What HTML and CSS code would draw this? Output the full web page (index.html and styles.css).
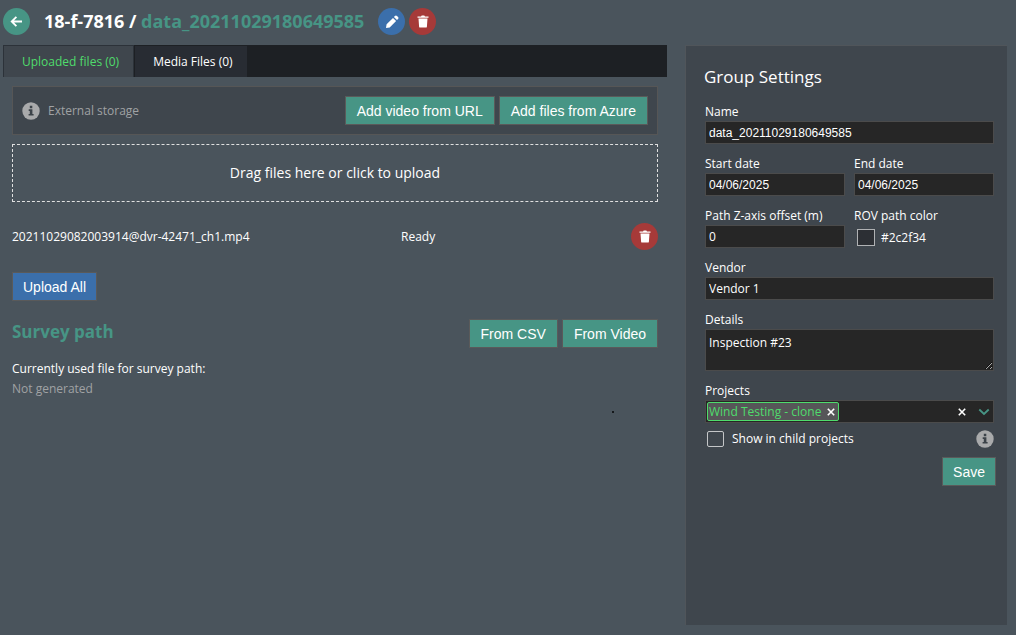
FILE: index.html
```
<!DOCTYPE html>
<html lang="en">
<head>
<meta charset="utf-8">
<title>Group upload</title>
<link rel="stylesheet" href="styles.css">
</head>
<body>
<svg class="sprite" aria-hidden="true">
  <symbol id="trash" viewBox="0 0 12 14"><path d="M.5 1.500h3.500l.7-1h2.600l.7 1h3.500v1.300H.5zM1.500 3.500h9l-.6 8.200a1 1 0 0 1-1 .9H3.100a1 1 0 0 1-1-.9z" fill="currentColor"/></symbol>
  <symbol id="info" viewBox="0 0 18 18"><circle cx="9" cy="9" r="8.700" fill="#a9aaab"/><path d="M7.800 3.800h2.500v2.400H7.800zM6.700 7.300h3.700v4.700h1.200v1.600H6.600V12h1.200V8.900H6.700z" fill="#3c4349"/></symbol>
  <symbol id="cross" viewBox="0 0 10 10"><path d="M1.800 1.800l6.400 6.400M8.200 1.800l-6.400 6.400" stroke="#fff" stroke-width="1.600" fill="none"/></symbol>
</svg>
<header class="topbar">
  <button class="round green" aria-label="Back"><svg width="13" height="13" viewBox="0 0 13 13"><path d="M12 6.500H2M6.400 1.800L1.700 6.500l4.700 4.700" fill="none" stroke="#fff" stroke-width="1.800"/></svg></button>
  <h1 class="title">18-f-7816 / <span class="accent">data_20211029180649585</span></h1>
  <div class="actions">
    <button class="round blue" aria-label="Rename"><svg width="14" height="14" viewBox="0 0 14 14"><path d="M1 13l.6-3.700L8 2.900l3.100 3.100-6.400 6.400zM8.900 2l1-1a1.500 1.500 0 0 1 2.100 0l1 1a1.500 1.500 0 0 1 0 2.100l-1 1z" fill="#fff"/></svg></button>
    <button class="round red" aria-label="Delete group"><svg width="12" height="14"><use href="#trash"/></svg></button>
  </div>
</header>
<div class="layout">
  <main class="main">
    <div class="tabs" role="tablist">
      <button class="tab active" role="tab" aria-selected="true">Uploaded files (0)</button>
      <button class="tab" role="tab" aria-selected="false">Media Files (0)</button>
    </div>
    <div class="content">
      <section class="storage">
        <svg width="18" height="18"><use href="#info"/></svg>
        <span class="storage-label">External storage</span>
        <div class="buttons">
          <button class="btn">Add video from URL</button>
          <button class="btn">Add files from Azure</button>
        </div>
      </section>
      <button class="dropzone">Drag files here or click to upload</button>
      <div class="file">
        <span>20211029082003914@dvr-42471_ch1.mp4</span>
        <span>Ready</span>
        <button class="round red" aria-label="Delete file"><svg width="12" height="14"><use href="#trash"/></svg></button>
      </div>
      <button class="btn upload">Upload All</button>
      <section class="survey">
        <div class="survey-head">
          <h2 class="subtitle">Survey path</h2>
          <div class="buttons">
            <button class="btn">From CSV</button>
            <button class="btn">From Video</button>
          </div>
        </div>
        <p class="line">Currently used file for survey path:</p>
        <p class="line muted">Not generated</p>
        <div class="speck"></div>
      </section>
    </div>
  </main>
  <aside class="panel">
    <h2 class="panel-title">Group Settings</h2>
    <form class="form">
      <div class="field wide"><label for="name">Name</label><input class="control arial" id="name" value="data_20211029180649585"></div>
      <div class="field"><label for="start">Start date</label><input class="control arial" id="start" value="04/06/2025"></div>
      <div class="field"><label for="end">End date</label><input class="control arial" id="end" value="04/06/2025"></div>
      <div class="field"><label for="offset">Path Z-axis offset (m)</label><input class="control" id="offset" value="0"></div>
      <div class="field"><label for="color">ROV path color</label><div class="color"><button class="swatch" type="button" id="color"></button><span>#2c2f34</span></div></div>
      <div class="field wide"><label for="vendor">Vendor</label><input class="control" id="vendor" value="Vendor 1"></div>
      <div class="field wide"><label for="details">Details</label><textarea class="control area" id="details">Inspection #23</textarea></div>
      <div class="field wide"><span id="projects">Projects</span>
        <div class="control multi" role="group" aria-labelledby="projects">
          <span class="chip">Wind Testing - clone<button class="plain" type="button" aria-label="Remove project"><svg width="10" height="10"><use href="#cross"/></svg></button></span>
          <button class="plain clear" type="button" aria-label="Clear projects"><svg width="10" height="10"><use href="#cross"/></svg></button>
          <button class="plain" type="button" aria-label="Open projects"><svg width="12" height="8" viewBox="0 0 12 8"><path d="M1.300 1.500L6 6l4.700-4.500" fill="none" stroke="#479585" stroke-width="1.800"/></svg></button>
        </div>
      </div>
      <div class="child wide">
        <input class="check" type="checkbox" id="child"><label for="child">Show in child projects</label>
        <svg class="hint" width="18" height="18"><use href="#info"/></svg>
      </div>
    </form>
    <button class="btn save">Save</button>
  </aside>
</div>
</body>
</html>
```
FILE: styles.css
```
* { box-sizing: border-box; }
body {
  margin: 0;
  min-height: 100vh;
  display: flex;
  flex-direction: column;
  background: #4a545c;
  color: #fff;
  font: 12px/18px "Open Sans", sans-serif;
}
h1, h2, p { margin: 0; }
button, input, textarea { font: inherit; color: inherit; }
button { cursor: pointer; }
svg { display: block; flex: none; }
.sprite { position: absolute; width: 0; height: 0; }

.topbar { display: flex; align-items: center; height: 45px; padding: 0 3px 2px; }
.title { margin-left: 14px; padding-bottom: 2px; font-size: 18px; line-height: 24px; font-weight: 700; }
.accent { color: #479585; }
.actions { display: flex; gap: 4px; margin-left: 14px; }
.round {
  width: 27px;
  height: 27px;
  padding: 0;
  border: 0;
  border-radius: 50%;
  display: flex;
  align-items: center;
  justify-content: center;
  color: #fff;
}
.green { background: #479585; }
.blue { background: #3b6fab; }
.red { background: #a63a39; }

.layout {
  flex: 1;
  display: grid;
  grid-template-columns: minmax(0, 664fr) minmax(0, 322fr);
  gap: 18px;
  padding: 0 9px 10px 3px;
}
.tabs { display: flex; height: 32px; background: #1d2024; }
.tab {
  padding: 0 14px 0 18px;
  border: 1px solid #1d2024;
  border-bottom: 0;
  background: #282c33;
}
.tab.active { background: #3f464d; color: #4fdc6c; border-color: #2c3239; }
.content { padding: 9px; }
.storage {
  display: flex;
  align-items: center;
  height: 49px;
  padding: 0 9px;
  border: 1px solid #565656;
  background: #3f464d;
}
.storage-label { margin-left: 8px; color: #a0a2a4; }
.buttons { display: flex; gap: 4px; margin-left: auto; }
.btn {
  height: 29px;
  padding: 0 11px;
  border: 1px solid #5a5a5a;
  background: #479585;
  font: 14px/18px "Liberation Sans", Arial, sans-serif;
}
.dropzone {
  width: 100%;
  height: 58px;
  margin-top: 9px;
  border: 1px dashed #e0e0e0;
  background: none;
  font-size: 14px;
}
.file { display: grid; grid-template-columns: 389fr 230fr 27px; align-items: center; margin: 21px 0 22px; }
.upload { display: block; padding: 0 10px; background: #3b6fab; }
.survey { margin-top: 18px; }
.survey-head { display: flex; align-items: center; }
.subtitle { padding-bottom: 4px; font-size: 17px; line-height: 24px; color: #479585; }
.survey-head + .line { margin-top: 11px; }
.line { line-height: 20px; }
.muted { color: #a0a2a4; }
.speck { width: 2px; height: 2px; margin: 12px 44px 0 auto; background: #15181b; }

.panel {
  padding: 18px 11px 18px 18px;
  border: 1px solid #50555a;
  border-width: 1px 0 0 1px;
  background: #3f464d;
}
.panel-title { font-size: 17px; line-height: 26px; font-weight: 400; }
.form { display: grid; grid-template-columns: 1fr 1fr; gap: 11px 9px; margin: 13px 2px 0 1px; }
.field { display: flex; flex-direction: column; }
.wide { grid-column: 1 / -1; }
.control {
  width: 100%;
  height: 23px;
  padding: 0 3px;
  border: 1px solid #4b4b4b;
  background: #262626;
}
.arial { font-family: "Liberation Sans", Arial, sans-serif; }
.area { display: block; height: 42px; padding-top: 4px; resize: vertical; }
.color { display: flex; align-items: center; gap: 6px; height: 23px; padding: 2px 0 0 3px; }
.swatch { width: 18px; height: 17px; padding: 0; border: 1px solid #b0b2b4; background: #2c2f34; }
.multi { display: flex; align-items: center; padding: 0 3px 0 1px; }
.chip {
  display: flex;
  align-items: center;
  gap: 5px;
  height: 19px;
  padding: 0 2px 0 1px;
  border: 1px solid #4fdc6c;
  border-radius: 2px;
  background: #565658;
  color: #4fdc6c;
}
.plain { padding: 0; border: 0; background: none; }
.clear { margin: 0 11px 0 auto; }
.child { display: flex; align-items: center; margin-top: -4px; }
.check {
  appearance: none;
  width: 17px;
  height: 16px;
  margin: 0 8px 0 2px;
  border: 1px solid #c4c6c8;
  border-radius: 2px;
}
.hint { margin-left: auto; }
.save { display: block; margin: 9px 0 0 auto; padding: 0 10px; }
```
